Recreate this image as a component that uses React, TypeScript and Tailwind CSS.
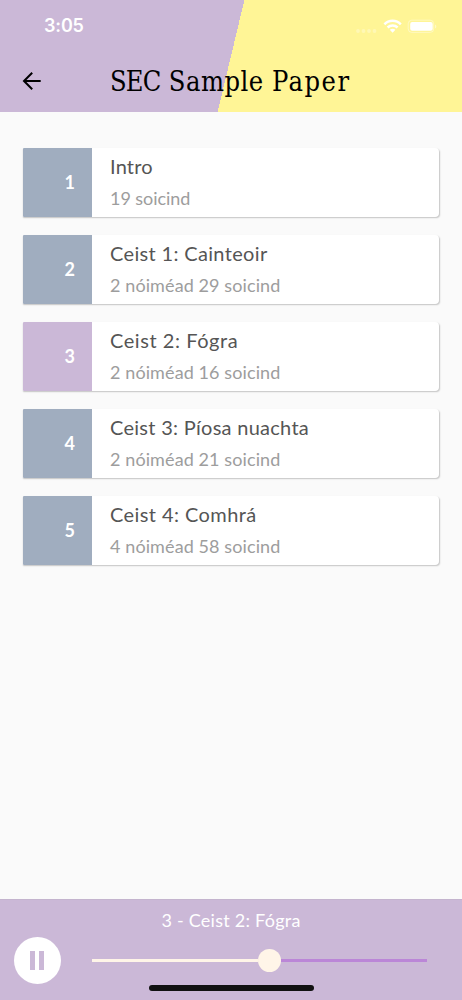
type Track = { id: number; title: string; duration: string; titleSpacing: string; durationSpacing: string };

const tracks: Track[] = [
  { id: 1, title: 'Intro', duration: '19 soicind', titleSpacing: 'tracking-[0.2px]', durationSpacing: 'tracking-[-0.05px]' },
  { id: 2, title: 'Ceist 1: Cainteoir', duration: '2 nóiméad 29 soicind', titleSpacing: 'tracking-[0.34px]', durationSpacing: 'tracking-[0.1px]' },
  { id: 3, title: 'Ceist 2: Fógra', duration: '2 nóiméad 16 soicind', titleSpacing: 'tracking-[0.56px]', durationSpacing: 'tracking-[0.1px]' },
  { id: 4, title: 'Ceist 3: Píosa nuachta', duration: '2 nóiméad 21 soicind', titleSpacing: 'tracking-[0.28px]', durationSpacing: 'tracking-[0.1px]' },
  { id: 5, title: 'Ceist 4: Comhrá', duration: '4 nóiméad 58 soicind', titleSpacing: 'tracking-[0.42px]', durationSpacing: 'tracking-[0.1px]' },
];

function StatusIcons() {
  return (
    <svg width="84" height="18" viewBox="0 0 84 18" fill="none" className="shrink-0">
      <g fill="#fff" fillOpacity="0.3">
        <circle cx="3" cy="14" r="1.9" />
        <circle cx="8.5" cy="14" r="1.9" />
        <circle cx="14" cy="14" r="1.9" />
        <circle cx="19.5" cy="14" r="1.9" />
      </g>
      <g stroke="#fff" strokeWidth="2.5">
        <path d="M29.4 7.300c4.400-4.600 12-4.600 16.400 0" />
        <path d="M32.600 10.500c2.800-2.700 7.200-2.700 10 0" />
      </g>
      <path d="M34.800 12.700c1.700-1.400 3.900-1.400 5.600 0L37.600 15.700z" fill="#fff" />
      <rect x="53.200" y="3.200" width="25.500" height="12.200" rx="3.600" stroke="#fff" strokeOpacity="0.4" />
      <rect x="55.200" y="5" width="22.500" height="8.800" rx="2" fill="#fff" />
      <path d="M80 7.400c1.800.7 1.800 3.400 0 4z" fill="#fff" fillOpacity="0.45" />
    </svg>
  );
}

function Header() {
  return (
    <header className="flex h-[112px] shrink-0 flex-col bg-[linear-gradient(103.4deg,#cbb8d7_50%,#fff596_50%)]">
      <div className="flex h-[50px] items-center justify-between pr-[23px] pl-[44px] pt-[2px]">
        <span className="font-['Inter',sans-serif] text-[18px] leading-none font-semibold tracking-[-0.15px] text-white">3:05</span>
        <StatusIcons />
      </div>
      <div className="flex h-[62px] items-center pl-[22px]">
        <button aria-label="Ar ais" className="flex h-5 w-5 shrink-0 items-center">
          <svg width="20" height="20" viewBox="0 0 20 20" fill="none" stroke="#000" strokeWidth="2">
            <path d="M18.700 10H2.200M10.200 1.800L2 10l8.200 8.200" />
          </svg>
        </button>
        <h1 className="ml-[68px] font-['DejaVu_Serif_Condensed','DejaVu_Serif',serif] text-[27px] leading-none tracking-[0.55px] whitespace-nowrap text-black">
          <span className="tracking-[-0.8px]">SEC</span> <span className="tracking-[0.5px]">Sample</span>{' '}
          <span className="tracking-[1.500px]">Paper</span>
        </h1>
      </div>
    </header>
  );
}

function TrackCard({ track, active }: { track: Track; active: boolean }) {
  return (
    <li className="flex h-[69px] rounded-r-[4px] rounded-l-[1px] bg-white shadow-[0.5px_1px_1.500px_rgba(0,0,0,0.22)]">
      <div
        className={`flex w-[69.5px] shrink-0 items-center justify-end rounded-l-[1px] pr-[17px] pb-[1px] text-[18px] font-bold text-white ${
          active ? 'bg-[#cbb8d7]' : 'bg-[#a0adbf]'
        }`}
      >
        {track.id}
      </div>
      <div className="flex flex-col pl-[18px]">
        <span className={`mt-[5px] text-[20px] leading-[26px] whitespace-nowrap text-[#555] ${track.titleSpacing}`}>{track.title}</span>
        <span className={`mt-[7px] text-[18px] leading-[24px] whitespace-nowrap text-[#9d9d9d] ${track.durationSpacing}`}>{track.duration}</span>
      </div>
    </li>
  );
}

function Player() {
  return (
    <footer className="flex h-[101px] shrink-0 flex-col border-t border-[#c4b4ce] bg-[#cbb8d7]">
      <p className="mt-[8px] text-center text-[18px] leading-[24px] tracking-[0.25px] text-white">3 - Ceist 2: Fógra</p>
      <div className="mt-[5px] flex h-[47px] items-center pl-[14px]">
        <button aria-label="Cuir ar sos" className="flex h-[47px] w-[47px] shrink-0 items-center justify-center gap-[4px] rounded-full bg-white pr-px">
          <span className="h-[19px] w-[5px] bg-[#cbb8d7]" />
          <span className="h-[19px] w-[5px] bg-[#cbb8d7]" />
        </button>
        <div className="ml-[31px] flex w-[335px] items-center">
          <span className="h-[2.500px] w-[166px] bg-[#fff5e8]" />
          <span className="h-[22.500px] w-[22.500px] shrink-0 rounded-full bg-[#fff5e8]" />
          <span className="h-[2.500px] flex-1 bg-[#bb86d7]" />
        </div>
      </div>
      <div className="mt-[1px] ml-[148.500px] h-[5.500px] w-[165px] rounded-full bg-[#111]" />
    </footer>
  );
}

export default function App() {
  return (
    <div className="flex h-[1000px] w-[462px] flex-col overflow-hidden bg-[#fafafa] font-['Lato',sans-serif]">
      <Header />
      <main className="flex-1 pt-[36px] pr-[23px] pl-[22.500px]">
        <ul className="flex flex-col gap-[18px]">
          {tracks.map((track) => (
            <TrackCard key={track.id} track={track} active={track.id === 3} />
          ))}
        </ul>
      </main>
      <Player />
    </div>
  );
}
